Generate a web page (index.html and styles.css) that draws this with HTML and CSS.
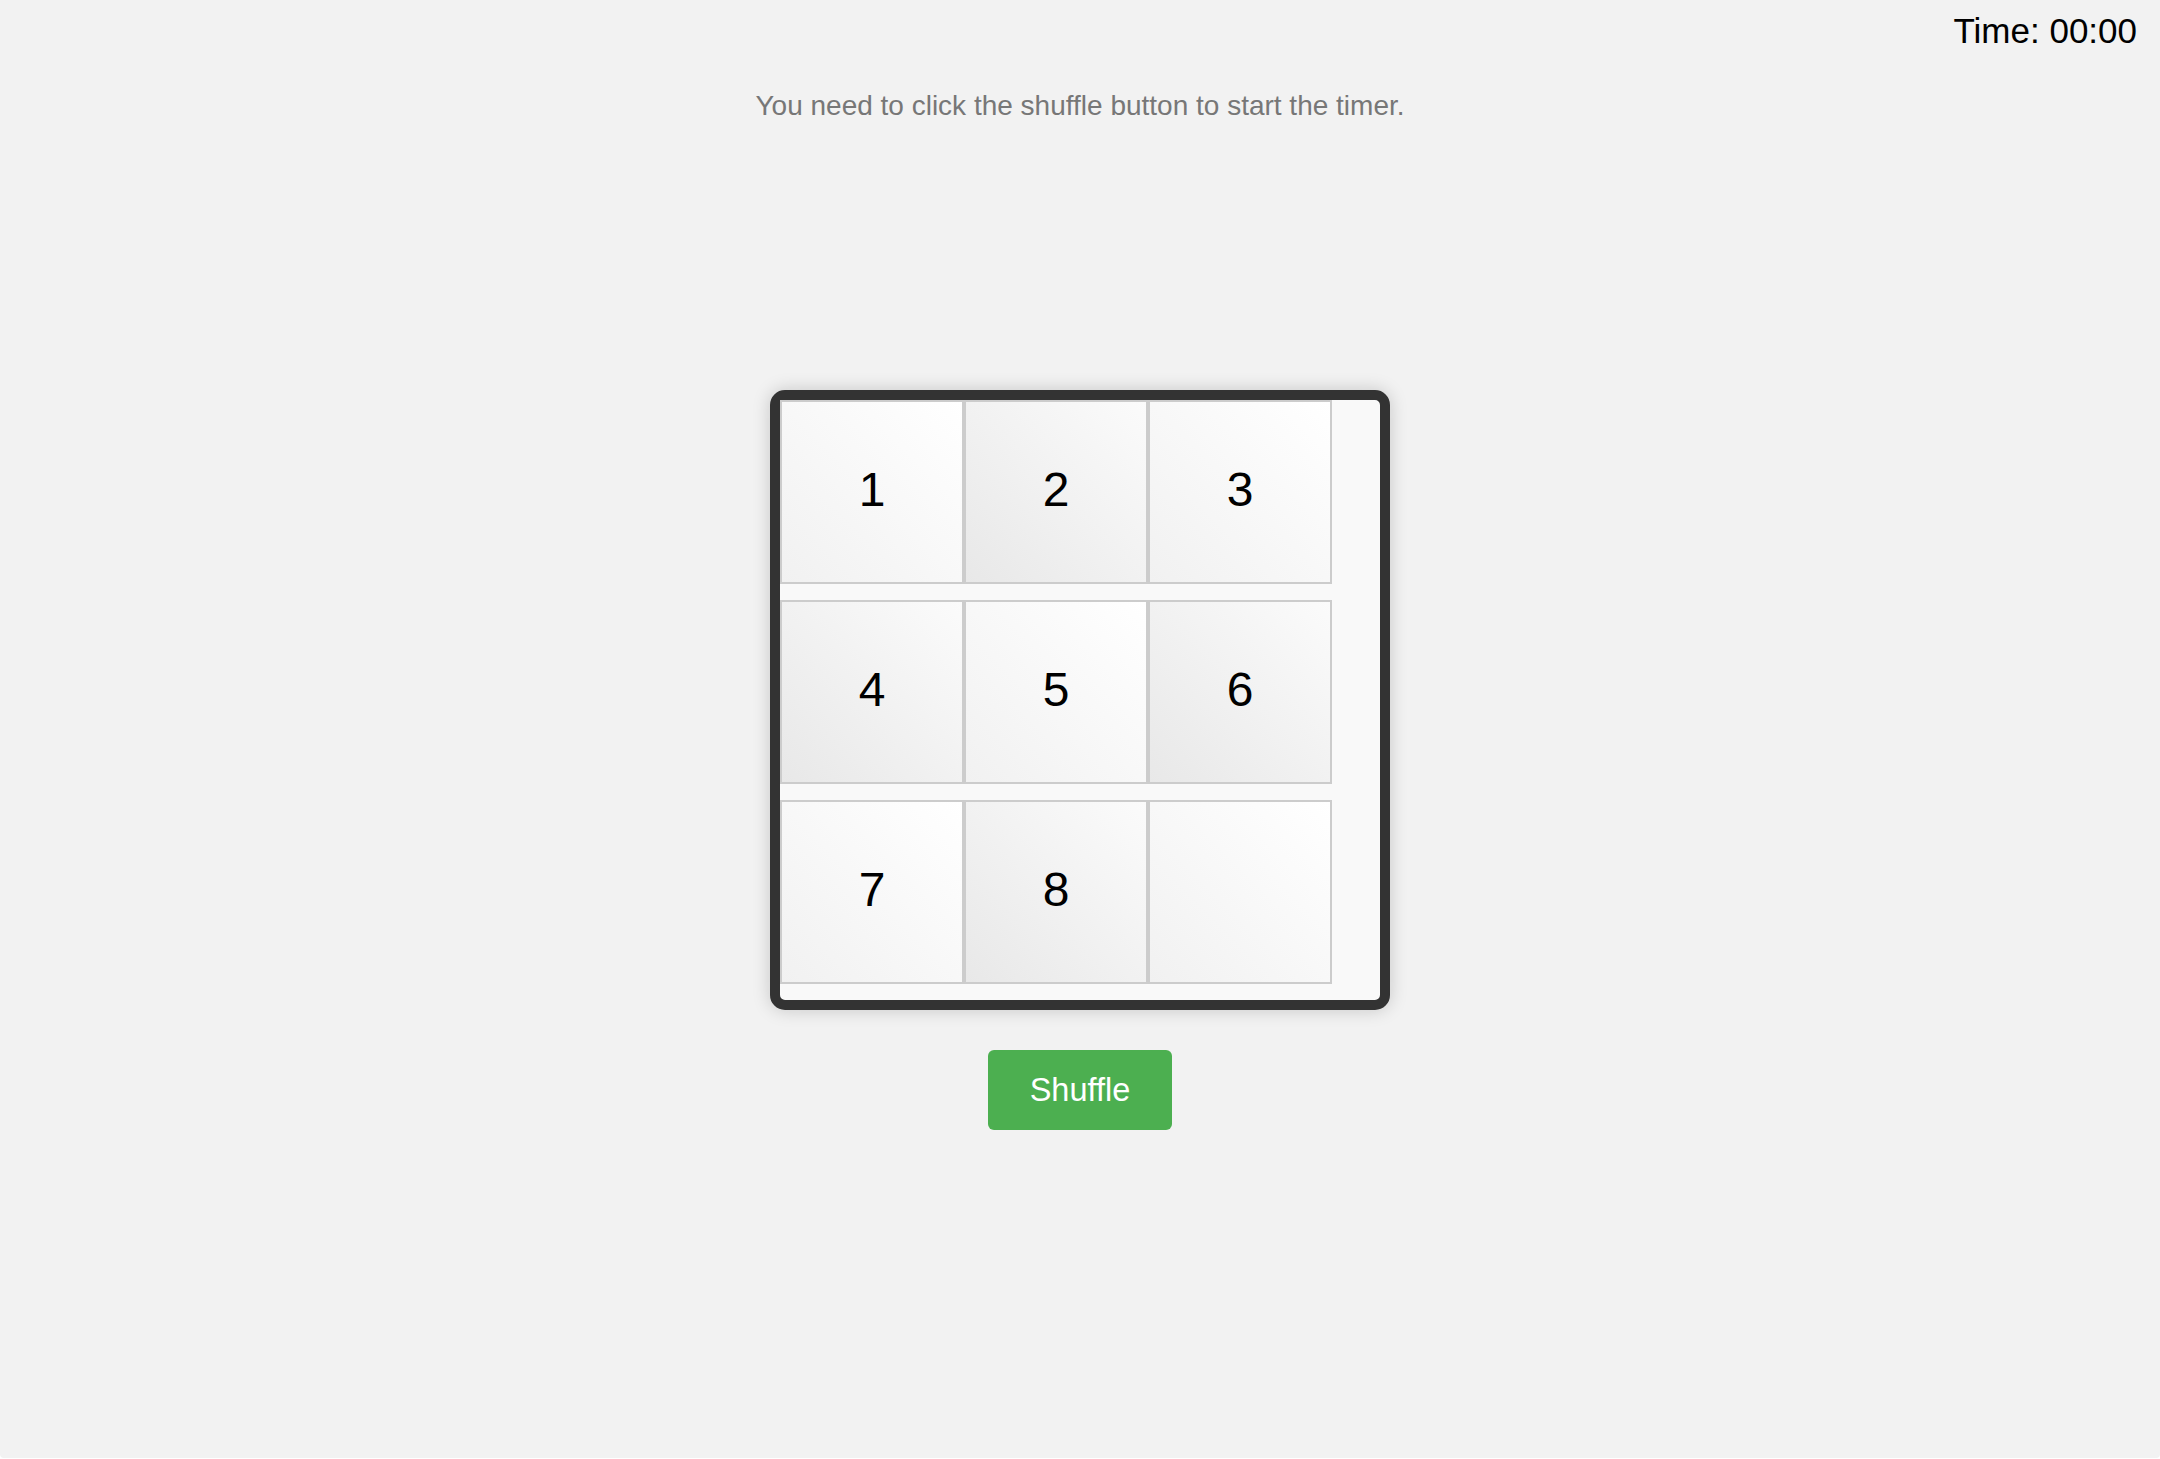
FILE: index.html
```html
<!DOCTYPE html>
<html lang="en">
<head>
<meta charset="utf-8">
<title>Sliding Puzzle</title>
<link rel="stylesheet" href="styles.css">
</head>
<body>
  <div class="topbar">
    <div class="timer">Time: 00:00</div>
  </div>
  <main class="game">
    <p class="hint">You need to click the shuffle button to start the timer.</p>
    <div class="board">
      <div class="tile tile-light">1</div>
      <div class="tile tile-dark">2</div>
      <div class="tile tile-light">3</div>
      <div class="tile tile-dark">4</div>
      <div class="tile tile-light">5</div>
      <div class="tile tile-dark">6</div>
      <div class="tile tile-light">7</div>
      <div class="tile tile-dark">8</div>
      <div class="tile tile-light tile-empty"></div>
    </div>
    <button class="shuffle" type="button">Shuffle</button>
  </main>
</body>
</html>
```
FILE: styles.css
```css
html {
  background: #ffffff;
}

body {
  margin: 0;
  height: 1458px;
  background: #f2f2f2;
  border-radius: 0 0 4px 4px;
  font-family: "Liberation Sans", Arial, Helvetica, sans-serif;
  color: #000;
  overflow: hidden;
}

.topbar {
  display: flex;
  justify-content: flex-end;
  padding: 11px 23px 0 0;
}

.timer {
  font-size: 35px;
  line-height: normal;
  color: #000;
}

.game {
  display: flex;
  flex-direction: column;
  align-items: center;
}

.hint {
  margin: 39px 0 0;
  font-size: 28px;
  line-height: normal;
  color: #777777;
}

.board {
  margin-top: 268px;
  width: 600px;
  height: 600px;
  border: 10px solid #333333;
  border-radius: 15px;
  background: #f9f9f9;
  box-shadow: 0 0 18px rgba(0, 0, 0, 0.18);
  display: grid;
  grid-template-columns: repeat(3, 184px);
  grid-auto-rows: 184px;
  row-gap: 16px;
  align-content: start;
}

.tile {
  box-sizing: border-box;
  border: 2px solid #cccccc;
  display: flex;
  align-items: center;
  justify-content: center;
  padding-bottom: 5px;
  font-size: 48px;
  color: #000;
}

.tile-light {
  background: linear-gradient(to top right, #f1f1f1, #ffffff);
}

.tile-dark {
  background: linear-gradient(to top right, #e8e8e8, #fbfbfb);
}

.shuffle {
  margin-top: 40px;
  width: 184px;
  height: 80px;
  border: none;
  border-radius: 6px;
  background: #4caf50;
  color: #ffffff;
  font-family: "Liberation Sans", Arial, Helvetica, sans-serif;
  font-size: 32.5px;
  padding: 0;
  cursor: pointer;
}
```
